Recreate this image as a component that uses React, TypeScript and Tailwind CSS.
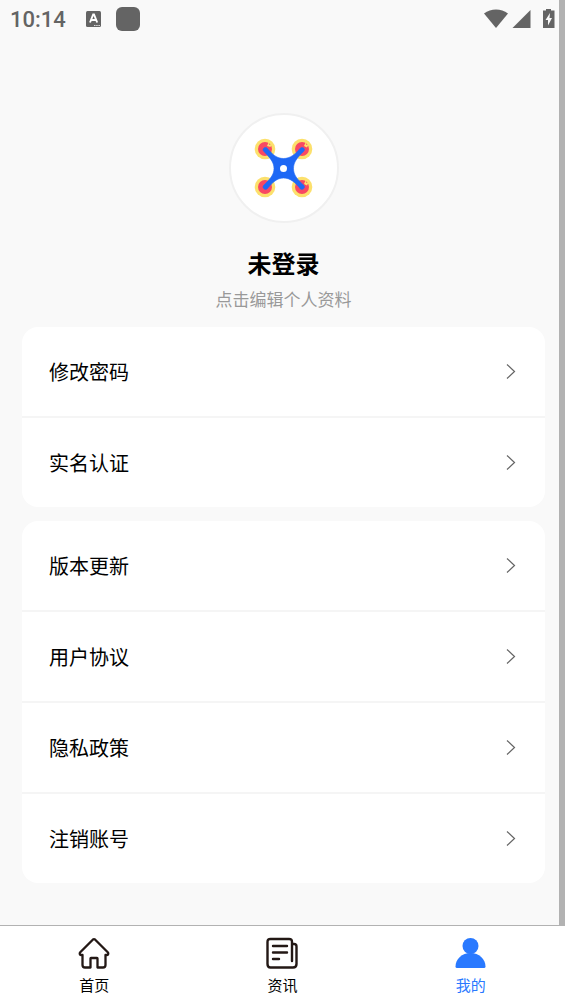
import React, { useState } from 'react';

const groups = [
  ['修改密码', '实名认证'],
  ['版本更新', '用户协议', '隐私政策', '注销账号'],
];

function StatusBar() {
  return (
    <header className="flex h-[38px] shrink-0 items-center justify-between px-[10px] text-[#646464]">
      <div className="flex items-center">
        <span className="w-[76px] pt-[2px] font-[Roboto] text-[22px] font-medium leading-[26px]">10:14</span>
        <svg width="15" height="16" viewBox="0 0 15 16" aria-hidden="true">
          <rect width="15" height="16" rx="1.5" fill="#646464" />
          <path d="M4 11.5 7.2 3.5h.8L11.2 11.5M5.2 9h5" fill="none" stroke="#fff" strokeWidth="1.9" />
          <path d="M8 14.5h6" stroke="#ddd" strokeWidth="1.2" strokeDasharray="1.5 0.7" />
        </svg>
        <span className="ml-[15px] h-6 w-6 rounded-md bg-[#646464]" />
      </div>
      <svg width="72" height="20" viewBox="0 0 72 20" fill="#646464" aria-hidden="true">
        <path d="M1 4.5C8 -0.8 18 -0.8 25 4.5L13 19z" />
        <path d="M47.5 1v18h-18z" />
        <path d="M60 1.5h3V-1h5v2.5h3.5V19H60z" />
        <path d="M67 4l-4.500 7h2.500v5.500l4-7.500h-2.500z" fill="#f9f9f9" />
      </svg>
    </header>
  );
}

function DroneLogo() {
  const rotors = [[11, 11], [48, 11], [11, 49], [48, 49]];
  return (
    <svg width="60" height="60" viewBox="0 0 60 60" aria-hidden="true">
      {rotors.map(([x, y]) => (
        <g key={`${x}-${y}`}>
          <circle cx={x} cy={y} r="10.3" fill="#fce06c" />
          <circle cx={x} cy={y} r="7" fill="#f84863" />
        </g>
      ))}
      <path d="M13 8l1.500-3.500 1 2.500 2-.5-1 2.500zM50 8l1.500-3.500 1 2.500 2-.5-1.500 3zM50 46l1.500-3.500 1 2.500 2-.5-1.500 3z" fill="#fce06c" />
      <path
        d="M9.5 13C8 11 10.500 8.500 13 10C19 17 23 20.500 29.500 20.500C36 20.500 41 16.500 46.500 10C49 8.500 51.500 11 50 13C43 20 39.500 24 39.500 30.500C39.500 37 43 41 50 47.500C51.500 49.500 49 52.500 46.500 51C41 44 36 40 29.500 40C23 40 19 44 13 51C10.500 52.500 8 49.500 9.500 47.500C16 41 20 37 20 30.500C20 24 16 20 9.500 13z"
        fill="#1e68f5"
        stroke="#1e68f5"
        strokeWidth="0.6"
      />
      <circle cx="29.5" cy="30.5" r="3.5" fill="#fff" />
    </svg>
  );
}

function HomeIcon() {
  return (
    <svg width="32" height="32" viewBox="0 0 32 32" fill="none" stroke="#231815" strokeWidth="2.3" strokeLinejoin="round" aria-hidden="true">
      <path d="M15 2.5 2 15.5Q1 18 3.500 18H4.500v10q0 2.500 2.500 2.500h5.500V21.500q0-.5.5-.5h6q.5 0 .5.5v9H25q2.500 0 2.500-2.500V18h1q2.500 0 1.500-2.500L17 2.500q-1-.8-2 0z" />
    </svg>
  );
}

function NewsIcon() {
  return (
    <svg width="32" height="32" viewBox="0 0 32 32" fill="none" stroke="#231815" strokeWidth="2.4" strokeLinecap="round" strokeLinejoin="round" aria-hidden="true">
      <path d="M26 24V5q0-3-3-3H4.500Q1.500 2 1.500 5v22q0 3.500 3 3.500H27q3.500 0 3.500-3.500V9.500q0-2.500-2.500-2.500h-2" />
      <path d="M7 9h14M7 15.500h14M7 22h6" />
    </svg>
  );
}

function UserIcon() {
  return (
    <svg width="32" height="32" viewBox="0 0 32 32" fill="#2979ff" aria-hidden="true">
      <circle cx="15.5" cy="9" r="8" />
      <path d="M.5 29.500C.5 22 7 16 15.500 16s15 6 15 13.500q0 1.500-1.500 1.500H2Q.5 31 .5 29.500z" />
    </svg>
  );
}

const tabs = [
  { label: '首页', icon: <HomeIcon /> },
  { label: '资讯', icon: <NewsIcon /> },
  { label: '我的', icon: <UserIcon /> },
];

export default function App() {
  const [active, setActive] = useState('我的');

  return (
    <div className="flex min-h-screen flex-col bg-[#f9f9f9] font-['Noto_Sans_CJK_SC',sans-serif] text-black">
      <div className="relative flex-1">
        <StatusBar />
        <main className="pb-10 pl-[22px] pr-5">
          <section className="flex flex-col items-center pt-[75px]">
            <button aria-label="头像" className="flex h-[110px] w-[110px] items-center justify-center rounded-full border-2 border-[#f0f0f0] bg-white">
              <DroneLogo />
            </button>
            <h1 className="mt-6 text-2xl font-bold leading-8">未登录</h1>
            <p className="mt-2 text-[17px] leading-6 text-[#999]">点击编辑个人资料</p>
          </section>

          <div className="mt-4 flex flex-col gap-[14px]">
            {groups.map((items) => (
              <ul key={items[0]} className="divide-y-2 divide-[#f5f5f5] overflow-hidden rounded-2xl bg-white">
                {items.map((item) => (
                  <li key={item}>
                    <button className="flex h-[89px] w-full items-center justify-between pl-[27px] pr-[29px] text-xl">
                      {item}
                      <svg width="10" height="16" viewBox="0 0 10 16" fill="none" stroke="#666" strokeWidth="1.2" aria-hidden="true">
                        <path d="M1 .5L8.500 7.500L1 14.500" />
                      </svg>
                    </button>
                  </li>
                ))}
              </ul>
            ))}
          </div>
        </main>
        {/* スクロールバー */}
        <div className="absolute inset-y-0 right-0 w-[6px] bg-[#b2b2b2]" />
      </div>

      <nav className="grid h-[79px] shrink-0 grid-cols-3 border-t border-[#b2b2b2] bg-white">
        {tabs.map((tab) => (
          <button
            key={tab.label}
            onClick={() => setActive(tab.label)}
            className={`flex flex-col items-center pt-[11px] text-[15px] leading-6 ${active === tab.label ? 'text-[#2979ff]' : 'text-black'}`}
          >
            {tab.icon}
            <span className="mt-1">{tab.label}</span>
          </button>
        ))}
      </nav>
    </div>
  );
}
